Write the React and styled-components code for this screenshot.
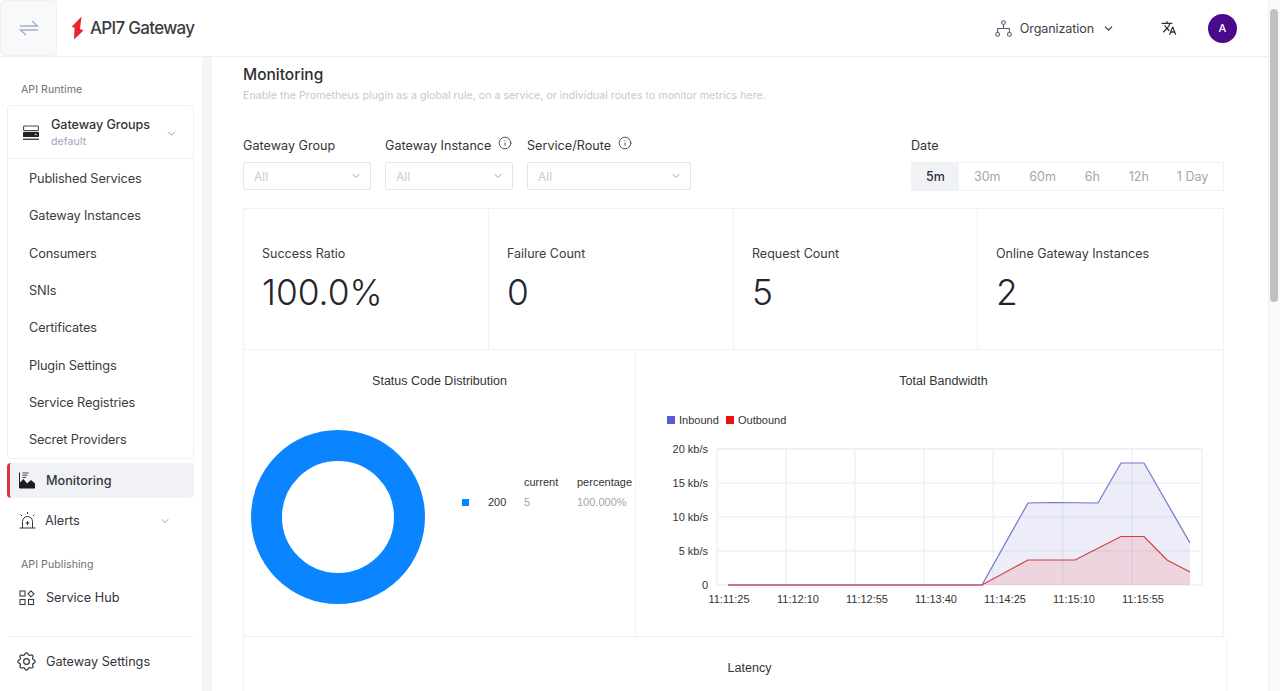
import React from "react";
import styled, { createGlobalStyle } from "styled-components";
import { ChevronDown, Info } from "lucide-react";
import { MdTranslate } from "react-icons/md";
import { TbSettings } from "react-icons/tb";

const GlobalStyle = createGlobalStyle`
  html, body {
    margin: 0;
    height: 691px;
    overflow: hidden;
    background: #fff;
    font-family: Inter, "Noto Sans", sans-serif;
    color: #2e2e33;
  }
  * { box-sizing: border-box; }
`;

const Shell = styled.div`
  display: flex;
  width: 1280px;
  height: 691px;
  overflow: hidden;
`;

const Page = styled.div`
  width: 1268px;
  display: flex;
  flex-direction: column;
`;

const ScrollTrack = styled.div`
  width: 12px;
  background: #fafafa;
  border-left: 1px solid #f1f1f1;
  padding: 9px 2px 0 1px;
`;

const ScrollThumb = styled.div`
  height: 293px;
  border-radius: 4px;
  background: #c1c1c1;
`;

const Header = styled.header`
  height: 57px;
  flex: none;
  display: flex;
  align-items: center;
  border-bottom: 1px solid #eeeff1;
  padding-right: 31px;
`;

const Toggle = styled.div`
  width: 57px;
  height: 56px;
  display: flex;
  align-items: center;
  justify-content: center;
  background: #f8f9fb;
  border: 1px solid #f0f1f4;
  border-radius: 4px;
`;

const Logo = styled.div`
  display: flex;
  align-items: center;
  margin-left: 14px;
  gap: 6px;
  font-size: 17px;
  font-weight: 500;
  letter-spacing: -0.7px;
  color: #3a3d42;
`;

const HeaderRight = styled.div`
  margin-left: auto;
  display: flex;
  align-items: center;
`;

const Org = styled.div`
  display: flex;
  align-items: center;
  font-size: 12.6px;
  letter-spacing: -0.12px;
  color: #3d4046;
  svg:first-child { margin-right: 8px; }
  svg:last-child { margin-left: 8px; color: #333; }
`;

const Translate = styled.div`
  margin-left: 46px;
  display: flex;
  color: #2f3136;
`;

const Avatar = styled.div`
  margin-left: 31px;
  width: 29px;
  height: 29px;
  border-radius: 50%;
  background: #4a0a8c;
  color: #fff;
  font-size: 11px;
  font-weight: 500;
  display: flex;
  align-items: center;
  justify-content: center;
`;

const Body = styled.div`
  flex: 1;
  display: flex;
  min-height: 0;
`;

const Sidebar = styled.aside`
  width: 212px;
  flex: none;
  padding: 0 8px 0 7px;
  border-right: 10px solid #f4f5f7;
`;

const SectionLabel = styled.div`
  font-size: 10.6px;
  line-height: 14px;
  color: #6d7075;
  padding-left: 14px;
  margin-top: ${(p) => p.$top}px;
  letter-spacing: 0.05px;
`;

const GroupBox = styled.div`
  margin-top: 8px;
  border: 1px solid #eff0f2;
  border-radius: 4px;
  height: 354px;
`;

const GroupHead = styled.div`
  height: 53px;
  margin-bottom: 1px;
  display: flex;
  align-items: center;
  padding: 2px 15px 0 15px;
  border-bottom: 1px solid #eff0f2;
  color: #33353a;
`;

const GroupText = styled.div`
  margin-left: 12px;
  flex: 1;
  font-size: 12.6px;
  line-height: 16px;
  font-weight: 500;
  letter-spacing: -0.05px;
  span {
    display: block;
    margin-top: 1px;
    font-size: 10.5px;
    line-height: 16px;
    font-weight: 400;
    letter-spacing: 0.1px;
    color: #9aa3bf;
  }
`;

const SubItem = styled.div`
  height: 37.3px;
  display: flex;
  align-items: center;
  padding-left: 21px;
  font-size: 12.75px;
  letter-spacing: -0.14px;
  color: #3a3c41;
`;

const NavItem = styled.div`
  display: flex;
  align-items: center;
  height: ${(p) => p.$h || 35}px;
  margin-top: ${(p) => p.$top || 0}px;
  padding-left: ${(p) => (p.$active ? 9 : 12)}px;
  padding-right: 23px;
  font-size: 12.7px;
  letter-spacing: -0.02px;
  font-weight: ${(p) => (p.$active ? 500 : 400)};
  color: #33353a;
  border-radius: 4px;
  background: ${(p) => (p.$active ? "#f1f2f5" : "transparent")};
  border-left: ${(p) => (p.$active ? "3px solid #d9353f" : "none")};
  label { margin-left: ${(p) => p.$gap || 10}px; flex: 1; }
`;

const GearIcon = styled(TbSettings)`
  margin-left: -4px;
  flex: none;
`;

const Divider = styled.div`
  height: 1px;
  background: #f1f2f4;
  margin: 21px 1px 7px;
`;

const Main = styled.main`
  flex: 1;
  padding-left: 31px;
  overflow: hidden;
`;

const Content = styled.div`
  width: 984px;
  padding-top: 8px;
`;

const Title = styled.h1`
  margin: 0;
  font-size: 15.5px;
  line-height: 20px;
  font-weight: 500;
  color: #2c2e33;
`;

const Desc = styled.p`
  margin: 3px 0 0;
  font-size: 10.6px;
  line-height: 16px;
  letter-spacing: 0.03px;
  color: #c6c8cc;
`;

const FilterRow = styled.div`
  display: flex;
  margin-top: 31px;
  height: 53px;
`;

const Filter = styled.div`
  width: ${(p) => p.$w}px;
  margin-right: 14px;
`;

const FieldLabel = styled.div`
  display: flex;
  align-items: center;
  height: 20px;
  gap: 7px;
  font-size: 12.6px;
  letter-spacing: 0.02px;
  color: #33353a;
  svg { margin-top: -4px; color: #2f3136; }
`;

const Select = styled.div`
  margin-top: 7px;
  height: 28px;
  border: 1px solid #e6e7ea;
  border-radius: 2px;
  display: flex;
  align-items: center;
  justify-content: space-between;
  padding: 0 8px 0 10px;
  font-size: 12px;
  color: #c9cbcf;
  svg { color: #75787d; }
`;

const DateBox = styled.div`
  margin-left: auto;
  margin-right: 3px;
  width: 313px;
`;

const Segments = styled.div`
  margin-top: 7px;
  height: 29px;
  display: flex;
  border: 1px solid #f1f2f4;
  font-size: 12.5px;
  color: #a3a5aa;
`;

const Segment = styled.div`
  width: ${(p) => p.$w}px;
  display: flex;
  align-items: center;
  justify-content: center;
  background: ${(p) => (p.$active ? "#f1f2f5" : "transparent")};
  color: ${(p) => (p.$active ? "#2f3136" : "inherit")};
  font-weight: ${(p) => (p.$active ? 500 : 400)};
`;

const Stats = styled.div`
  margin-top: 20px;
  width: 981px;
  display: grid;
  grid-template-columns: 244px 245px 244px 1fr;
  height: 142px;
  border: 1px solid #f1f2f4;
`;

const Stat = styled.div`
  padding: 36px 0 0 18px;
  border-left: ${(p) => (p.$first ? "none" : "1px solid #f1f2f4")};
`;

const StatLabel = styled.div`
  font-size: 12.5px;
  line-height: 18px;
  color: #3a3c41;
`;

const StatValue = styled.div`
  margin-top: 8px;
  font-size: 35.3px;
  line-height: 44px;
  font-weight: 300;
  color: #24262b;
`;

const Charts = styled.div`
  width: 981px;
  height: 287px;
  display: flex;
  border: 1px solid #f1f2f4;
  border-top: none;
`;

const ChartPanel = styled.section`
  width: ${(p) => p.$w}px;
  flex: none;
  border-left: ${(p) => (p.$first ? "none" : "1px solid #f1f2f4")};
`;

const ChartTitle = styled.div`
  height: 50px;
  padding: 23px 0 0 ${(p) => p.$indent || 0}px;
  text-align: center;
  font-family: "Liberation Sans", Arial, sans-serif;
  font-size: 12.5px;
  line-height: 16px;
  color: #333;
`;

const DonutWrap = styled.div`
  display: flex;
  padding: 29px 0 0 6px;
`;

const Legend = styled.div`
  margin: 43px 0 0 36px;
  display: grid;
  grid-template-columns: 26px 36px 53px auto;
  grid-auto-rows: 20px;
  align-items: center;
  align-content: start;
  font-family: "Liberation Sans", Arial, sans-serif;
  font-size: 11px;
  color: #333;
`;

const Swatch = styled.i`
  width: 7px;
  height: 7px;
  background: #0a85ff;
`;

const Muted = styled.span`
  color: #a6a6a6;
`;

const Latency = styled.section`
  width: 984px;
  height: 60px;
  border-left: 1px solid #f1f2f4;
  border-right: 1px solid #f1f2f4;
  padding: 23px 0 0 29px;
  text-align: center;
  font-family: "Liberation Sans", Arial, sans-serif;
  font-size: 12.5px;
  line-height: 16px;
  color: #333;
`;

const SwapIcon = () => (
  <svg width="20" height="18" viewBox="0 0 20 18" fill="none" stroke="#a3adc6" strokeWidth="1.3">
    <path d="M1 7h17.5L13 2" />
    <path d="M19 11H1.5L7 16" />
  </svg>
);

const BoltIcon = () => (
  <svg width="13" height="24" viewBox="0 0 13 24">
    <path fill="#e8262b" d="M10.5 0.5 0.5 11 3.5 11.5 3 23.5 12.5 14.5 9 13Z" />
  </svg>
);

const OrgIcon = () => (
  <svg width="17" height="17" viewBox="0 0 17 17" fill="none" stroke="#50607a" strokeWidth="1.1">
    <circle cx="8.5" cy="2.6" r="1.9" />
    <circle cx="2.6" cy="14.4" r="1.9" />
    <circle cx="14.4" cy="14.4" r="1.9" />
    <path d="M8.5 4.5V8.5M2.6 12.5V8.5H14.4V12.5" />
  </svg>
);

const ServerIcon = () => (
  <svg width="16" height="16" viewBox="0 0 16 16" fill="none">
    <rect x="0.6" y="1" width="14.8" height="4.6" rx="0.8" stroke="#4a4c50" strokeWidth="1.1" />
    <rect x="0" y="7" width="16" height="5" rx="0.8" fill="#222" />
    <rect x="11.5" y="8.8" width="2.5" height="1.4" fill="#aaa" />
    <rect x="0" y="13.6" width="16" height="1.3" fill="#333" />
  </svg>
);

const MonitorIcon = () => (
  <svg width="16" height="17" viewBox="0 0 16 17">
    <path fill="none" stroke="#222" strokeWidth="1" d="M0.5 0.5V16" />
    <path fill="none" stroke="#444" strokeWidth="1" d="M3.5 1h6M3.5 3.2h5M3.5 5.4h3.5" />
    <path fill="#1c1c1f" d="M0.5 16.5V11L4.5 7 8 11.5 12 8 16 11.5V16.5Z" />
  </svg>
);

const SirenIcon = () => (
  <svg width="17" height="17" viewBox="0 0 17 17" fill="none" stroke="#333" strokeWidth="1">
    <path d="M0.5 16h16" />
    <path d="M3.5 16V9.5a5 5 0 0 1 10 0V16" />
    <path d="M8.5 9v4M6.5 11h4" />
    <path d="M8.5 0v2M1.5 2.5l1.5 1.5M15.5 2.5 14 4" />
  </svg>
);

const HubIcon = () => (
  <svg width="16" height="16" viewBox="0 0 16 16" fill="none" stroke="#3c3e43" strokeWidth="1.1">
    <rect x="1" y="1" width="5" height="5" />
    <rect x="1" y="9.5" width="5" height="5" />
    <rect x="9.5" y="9.5" width="5" height="5" />
    <path d="M12 0.8 15 3.8 12 6.8 9 3.8Z" />
  </svg>
);

const DonutChart = () => (
  <svg width="176" height="176" viewBox="0 0 176 176">
    <circle cx="88" cy="88" r="71.5" fill="none" stroke="#0a85ff" strokeWidth="31" />
  </svg>
);

const hLines = [450, 484, 518, 552];
const vLines = [786, 855, 924, 993, 1063, 1132];
const yTicks = [
  ["20 kb/s", 450],
  ["15 kb/s", 484],
  ["10 kb/s", 518],
  ["5 kb/s", 552],
  ["0", 586],
];
const xTicks = [
  ["11:11:25", 729],
  ["11:12:10", 798],
  ["11:12:55", 867],
  ["11:13:40", 936],
  ["11:14:25", 1005],
  ["11:15:10", 1074],
  ["11:15:55", 1143],
];
const inbound = "728,586 982,586 1028,504 1052,503.5 1098,504 1121,464 1144,464 1167,504 1190,544";
const outbound = "728,586 982,586 1028,561 1075,561 1121,537.5 1144,537.5 1167,561 1190,573";

const BandwidthChart = () => (
  <svg
    width="588"
    height="236"
    viewBox="636 401 588 236"
    fontFamily="'Liberation Sans', Arial, sans-serif"
    fontSize="11"
    fill="#333"
    style={{ display: "block" }}
  >
    <rect x="667" y="417" width="8" height="8" fill="#5b5bd6" />
    <text x="679" y="425">Inbound</text>
    <rect x="726" y="417" width="8" height="8" fill="#ee1111" />
    <text x="738" y="425">Outbound</text>
    <rect x="717" y="450" width="485" height="136" fill="none" stroke="#e9ebf3" />
    {hLines.map((y) => (
      <line key={y} x1="717" x2="1202" y1={y} y2={y} stroke="#e9ebf3" />
    ))}
    {vLines.map((x) => (
      <line key={x} x1={x} x2={x} y1="450" y2="586" stroke="#e9ebf3" />
    ))}
    <polygon points={`${inbound} 1190,586`} fill="#5b5bd6" fillOpacity="0.11" />
    <polygon points={`${outbound} 1190,586`} fill="#ee1111" fillOpacity="0.11" />
    <polyline points={inbound} fill="none" stroke="#7373cf" strokeWidth="1.2" />
    <polyline points={outbound} fill="none" stroke="#d83a3f" strokeWidth="1.2" />
    {yTicks.map(([t, y]) => (
      <text key={t} x="708" y={y + 4} textAnchor="end">{t}</text>
    ))}
    {xTicks.map(([t, x]) => (
      <text key={t} x={x} y="604" textAnchor="middle">{t}</text>
    ))}
  </svg>
);

const subItems = [
  "Published Services",
  "Gateway Instances",
  "Consumers",
  "SNIs",
  "Certificates",
  "Plugin Settings",
  "Service Registries",
  "Secret Providers",
];

const stats = [
  ["Success Ratio", "100.0%"],
  ["Failure Count", "0"],
  ["Request Count", "5"],
  ["Online Gateway Instances", "2"],
];

const ranges = [
  ["5m", 47],
  ["30m", 57],
  ["60m", 54],
  ["6h", 46],
  ["12h", 47],
  ["1 Day", 61],
];

export default function App() {
  return (
    <>
      <GlobalStyle />
      <Shell>
        <Page>
          <Header>
            <Toggle><SwapIcon /></Toggle>
            <Logo><BoltIcon />API7 Gateway</Logo>
            <HeaderRight>
              <Org>
                <OrgIcon />
                Organization
                <ChevronDown size={13} />
              </Org>
              <Translate><MdTranslate size={16} /></Translate>
              <Avatar>A</Avatar>
            </HeaderRight>
          </Header>
          <Body>
            <Sidebar>
              <SectionLabel $top={26}>API Runtime</SectionLabel>
              <GroupBox>
                <GroupHead>
                  <ServerIcon />
                  <GroupText>
                    Gateway Groups
                    <span>default</span>
                  </GroupText>
                  <ChevronDown size={13} strokeWidth={1.3} color="#6b6e73" />
                </GroupHead>
                {subItems.map((item) => (
                  <SubItem key={item}>{item}</SubItem>
                ))}
              </GroupBox>
              <NavItem $active $top={4} $gap={11}>
                <MonitorIcon />
                <label>Monitoring</label>
              </NavItem>
              <NavItem $top={5} $gap={9}>
                <SirenIcon />
                <label>Alerts</label>
                <ChevronDown size={12} strokeWidth={1.3} color="#6b6e73" />
              </NavItem>
              <SectionLabel $top={20}>API Publishing</SectionLabel>
              <NavItem $top={8} $gap={11}>
                <HubIcon />
                <label>Service Hub</label>
              </NavItem>
              <Divider />
              <NavItem $gap={8}>
                <GearIcon size={23} strokeWidth={1.3} />
                <label>Gateway Settings</label>
              </NavItem>
            </Sidebar>
            <Main>
              <Content>
                <Title>Monitoring</Title>
                <Desc>Enable the Prometheus plugin as a global rule, on a service, or individual routes to monitor metrics here.</Desc>
                <FilterRow>
                  <Filter $w={128}>
                    <FieldLabel>Gateway Group</FieldLabel>
                    <Select>All<ChevronDown size={12} strokeWidth={1.4} /></Select>
                  </Filter>
                  <Filter $w={128}>
                    <FieldLabel>Gateway Instance<Info size={14} strokeWidth={1.4} /></FieldLabel>
                    <Select>All<ChevronDown size={12} strokeWidth={1.4} /></Select>
                  </Filter>
                  <Filter $w={164}>
                    <FieldLabel>Service/Route<Info size={14} strokeWidth={1.4} /></FieldLabel>
                    <Select>All<ChevronDown size={12} strokeWidth={1.4} /></Select>
                  </Filter>
                  <DateBox>
                    <FieldLabel>Date</FieldLabel>
                    <Segments>
                      {ranges.map(([r, w], i) => (
                        <Segment key={r} $w={w} $active={i === 0}>{r}</Segment>
                      ))}
                    </Segments>
                  </DateBox>
                </FilterRow>
                <Stats>
                  {stats.map(([label, value], i) => (
                    <Stat key={label} $first={i === 0}>
                      <StatLabel>{label}</StatLabel>
                      <StatValue>{value}</StatValue>
                    </Stat>
                  ))}
                </Stats>
                <Charts>
                  <ChartPanel $w={391} $first>
                    <ChartTitle>Status Code Distribution</ChartTitle>
                    <DonutWrap>
                      <DonutChart />
                      <Legend>
                        <span />
                        <span />
                        <span>current</span>
                        <span>percentage</span>
                        <Swatch />
                        <span>200</span>
                        <Muted>5</Muted>
                        <Muted>100.000%</Muted>
                      </Legend>
                    </DonutWrap>
                  </ChartPanel>
                  <ChartPanel $w={589}>
                    <ChartTitle $indent={27}>Total Bandwidth</ChartTitle>
                    <BandwidthChart />
                  </ChartPanel>
                </Charts>
                <Latency>Latency</Latency>
              </Content>
            </Main>
          </Body>
        </Page>
        <ScrollTrack><ScrollThumb /></ScrollTrack>
      </Shell>
    </>
  );
}
